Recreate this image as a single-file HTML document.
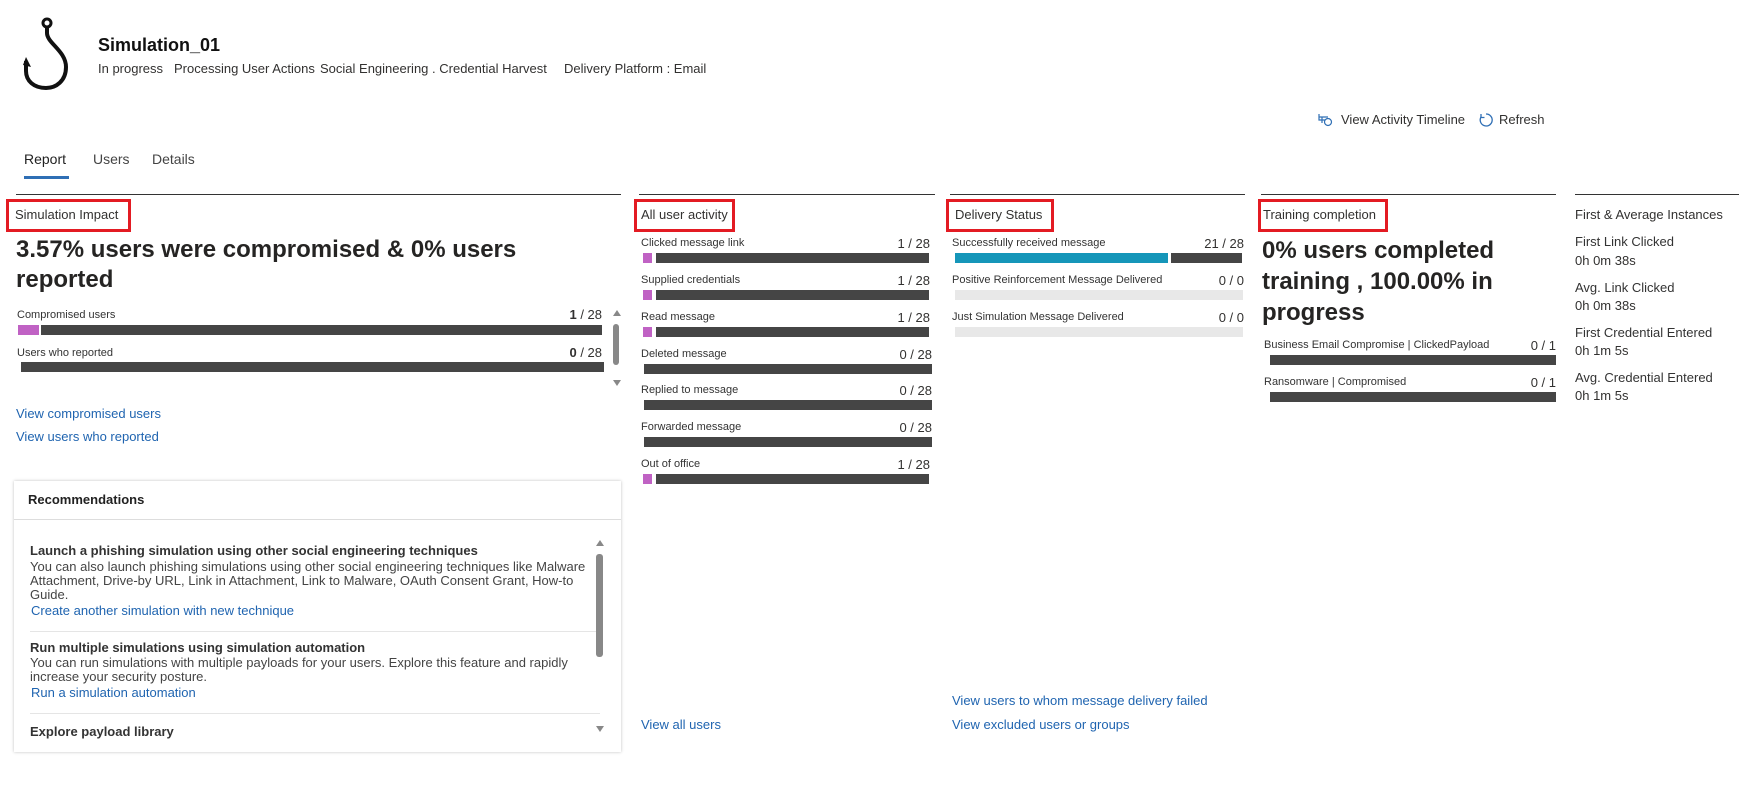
<!DOCTYPE html>
<html><head><meta charset="utf-8"><style>
body{margin:0;width:1739px;height:789px;background:#fff;font-family:"Liberation Sans",sans-serif;color:#323130;position:relative;overflow:hidden}
.a{position:absolute;white-space:nowrap;line-height:16px}
.s{font-size:11px;color:#333}
.m{font-size:13px}
.b{font-weight:bold}
.lk{color:#1f64b0;font-size:13px}
.ln{position:absolute;height:1px;background:#333;top:194px}
.rb{position:absolute;top:199px;height:27px;border:3px solid #e31b23}
.bar{position:absolute;height:10px;background:#454545}
.pu{position:absolute;height:10px;background:#c062c4}
.gr{position:absolute;height:10px;background:#e8e8e8}
.v{position:absolute;font-size:13px;line-height:16px;text-align:right}
.h{position:absolute;font-size:24px;font-weight:bold;line-height:30px;color:#252423}
</style></head><body>
<svg style="position:absolute;left:22px;top:17px" width="52" height="74" viewBox="0 0 52 74"><circle cx="25" cy="6" r="4" fill="none" stroke="#111" stroke-width="3"/><path d="M25 10 L25 16 C25 26 44 34 44 50 C44 64 34 71 24 71 C12 71 4 64 4 54 L4 44" fill="none" stroke="#111" stroke-width="4"/><path d="M1 48 L4 40 L9 50 Z" fill="#111"/></svg>
<div class="a b" style="left:98px;top:35px;font-size:18px;line-height:20px;color:#111">Simulation_01</div>
<div class="a m" style="left:98px;top:61px">In progress</div>
<div class="a m" style="left:174px;top:61px">Processing User Actions</div>
<div class="a m" style="left:320px;top:61px">Social Engineering . Credential Harvest</div>
<div class="a m" style="left:564px;top:61px">Delivery Platform : Email</div>
<svg style="position:absolute;left:1318px;top:112px" width="15" height="15" viewBox="0 0 15 15"><path d="M1 2v6h6M1 5h9M4 5v6" fill="none" stroke="#2f6fb5" stroke-width="1.2"/><circle cx="10" cy="10" r="3.5" fill="none" stroke="#2f6fb5" stroke-width="1.2"/></svg>
<div class="a m" style="left:1341px;top:112px">View Activity Timeline</div>
<svg style="position:absolute;left:1478px;top:112px" width="16" height="16" viewBox="0 0 16 16"><path d="M8 2 A6 6 0 1 1 3 5" fill="none" stroke="#2f6fb5" stroke-width="1.3"/><path d="M3 2v3.5h3.5" fill="none" stroke="#2f6fb5" stroke-width="1.3"/></svg>
<div class="a m" style="left:1499px;top:112px">Refresh</div>
<div class="a" style="left:24px;top:151px;font-size:14px;color:#222">Report</div>
<div class="a" style="left:93px;top:151px;font-size:14px;color:#444">Users</div>
<div class="a" style="left:152px;top:151px;font-size:14px;color:#444">Details</div>
<div style="position:absolute;left:24px;top:176px;width:45px;height:3px;background:#2f6fb5"></div>

<div class="ln" style="left:16px;width:605px"></div>
<div class="ln" style="left:639px;width:296px"></div>
<div class="ln" style="left:950px;width:295px"></div>
<div class="ln" style="left:1261px;width:295px"></div>
<div class="ln" style="left:1575px;width:164px"></div>
<div class="rb" style="left:6px;width:119px"></div>
<div class="rb" style="left:634px;width:95px"></div>
<div class="rb" style="left:946px;width:102px"></div>
<div class="rb" style="left:1258px;width:124px"></div>
<div class="a m" style="left:15px;top:207px">Simulation Impact</div>
<div class="a m" style="left:641px;top:207px">All user activity</div>
<div class="a m" style="left:955px;top:207px">Delivery Status</div>
<div class="a m" style="left:1263px;top:207px">Training completion</div>
<div class="a m" style="left:1575px;top:207px">First &amp; Average Instances</div>

<div class="h" style="left:16px;top:235px;width:600px">3.57% users were compromised &amp; 0% users reported</div>
<div class="a s" style="left:17px;top:307px">Compromised users</div>
<div class="v" style="left:540px;width:62px;top:307px"><b>1</b> / 28</div>
<div class="pu" style="left:18px;top:325px;width:21px"></div><div class="bar" style="left:41px;top:325px;width:561px"></div>
<div class="a s" style="left:17px;top:345px">Users who reported</div>
<div class="v" style="left:540px;width:62px;top:345px"><b>0</b> / 28</div>
<div class="bar" style="left:21px;top:362px;width:583px"></div>
<div style="position:absolute;left:613px;top:310px;width:0;height:0;border:4px solid transparent;border-bottom:6px solid #888;border-top:0"></div>
<div style="position:absolute;left:613px;top:324px;width:6px;height:41px;background:#888;border-radius:3px"></div>
<div style="position:absolute;left:613px;top:380px;width:0;height:0;border:4px solid transparent;border-top:6px solid #888;border-bottom:0"></div>
<div class="a lk" style="left:16px;top:406px">View compromised users</div>
<div class="a lk" style="left:16px;top:429px">View users who reported</div>

<div style="position:absolute;left:14px;top:481px;width:607px;height:271px;box-shadow:0 0 3px rgba(0,0,0,.25);background:#fff"></div>
<div class="a b m" style="left:28px;top:492px;color:#222">Recommendations</div>
<div style="position:absolute;left:14px;top:519px;width:607px;height:1px;background:#ddd"></div>
<div class="a b m" style="left:30px;top:543px;color:#333">Launch a phishing simulation using other social engineering techniques</div>
<div class="a m" style="left:30px;top:560px;line-height:14px;white-space:normal;width:560px;color:#444">You can also launch phishing simulations using other social engineering techniques like Malware Attachment, Drive-by URL, Link in Attachment, Link to Malware, OAuth Consent Grant, How-to Guide.</div>
<div class="a lk" style="left:31px;top:603px">Create another simulation with new technique</div>
<div style="position:absolute;left:30px;top:631px;width:570px;height:1px;background:#e5e5e5"></div>
<div class="a b m" style="left:30px;top:640px;color:#333">Run multiple simulations using simulation automation</div>
<div class="a m" style="left:30px;top:656px;line-height:14px;white-space:normal;width:560px;color:#444">You can run simulations with multiple payloads for your users. Explore this feature and rapidly increase your security posture.</div>
<div class="a lk" style="left:31px;top:685px">Run a simulation automation</div>
<div style="position:absolute;left:30px;top:713px;width:570px;height:1px;background:#e5e5e5"></div>
<div style="position:absolute;left:30px;top:722px;height:17px;overflow:hidden;font-size:13px;font-weight:bold;color:#333;line-height:20px">Explore payload library</div>
<div style="position:absolute;left:596px;top:540px;width:0;height:0;border:4px solid transparent;border-bottom:6px solid #888;border-top:0"></div>
<div style="position:absolute;left:596px;top:554px;width:7px;height:103px;background:#888;border-radius:3px"></div>
<div style="position:absolute;left:596px;top:726px;width:0;height:0;border:4px solid transparent;border-top:6px solid #888;border-bottom:0"></div>

<!-- panel 2 -->
<div class="a s" style="left:641px;top:235px">Clicked message link</div><div class="v" style="left:870px;width:60px;top:236px">1 / 28</div><div class="pu" style="left:643px;top:253px;width:9px"></div><div class="bar" style="left:656px;top:253px;width:273px"></div>
<div class="a s" style="left:641px;top:272px">Supplied credentials</div><div class="v" style="left:870px;width:60px;top:273px">1 / 28</div><div class="pu" style="left:643px;top:290px;width:9px"></div><div class="bar" style="left:656px;top:290px;width:273px"></div>
<div class="a s" style="left:641px;top:309px">Read message</div><div class="v" style="left:870px;width:60px;top:310px">1 / 28</div><div class="pu" style="left:643px;top:327px;width:9px"></div><div class="bar" style="left:656px;top:327px;width:273px"></div>
<div class="a s" style="left:641px;top:346px">Deleted message</div><div class="v" style="left:870px;width:62px;top:347px">0 / 28</div><div class="bar" style="left:644px;top:364px;width:288px"></div>
<div class="a s" style="left:641px;top:382px">Replied to message</div><div class="v" style="left:870px;width:62px;top:383px">0 / 28</div><div class="bar" style="left:644px;top:400px;width:288px"></div>
<div class="a s" style="left:641px;top:419px">Forwarded message</div><div class="v" style="left:870px;width:62px;top:420px">0 / 28</div><div class="bar" style="left:644px;top:437px;width:288px"></div>
<div class="a s" style="left:641px;top:456px">Out of office</div><div class="v" style="left:870px;width:60px;top:457px">1 / 28</div><div class="pu" style="left:643px;top:474px;width:9px"></div><div class="bar" style="left:656px;top:474px;width:273px"></div>
<div class="a lk" style="left:641px;top:717px">View all users</div>

<!-- panel 3 -->
<div class="a s" style="left:952px;top:235px">Successfully received message</div><div class="v" style="left:1180px;width:64px;top:236px">21 / 28</div>
<div style="position:absolute;left:955px;top:253px;width:213px;height:10px;background:#1596b9"></div><div class="bar" style="left:1171px;top:253px;width:71px"></div>
<div class="a s" style="left:952px;top:272px">Positive Reinforcement Message Delivered</div><div class="v" style="left:1180px;width:64px;top:273px">0 / 0</div><div class="gr" style="left:955px;top:290px;width:288px"></div>
<div class="a s" style="left:952px;top:309px">Just Simulation Message Delivered</div><div class="v" style="left:1180px;width:64px;top:310px">0 / 0</div><div class="gr" style="left:955px;top:327px;width:288px"></div>
<div class="a lk" style="left:952px;top:693px">View users to whom message delivery failed</div>
<div class="a lk" style="left:952px;top:717px">View excluded users or groups</div>

<!-- panel 4 -->
<div class="h" style="left:1262px;top:235px;width:290px;line-height:31px">0% users completed training , 100.00% in progress</div>
<div class="a s" style="left:1264px;top:337px">Business Email Compromise | ClickedPayload</div><div class="v" style="left:1500px;width:56px;top:338px">0 / 1</div><div class="bar" style="left:1270px;top:355px;width:286px"></div>
<div class="a s" style="left:1264px;top:374px">Ransomware | Compromised</div><div class="v" style="left:1500px;width:56px;top:375px">0 / 1</div><div class="bar" style="left:1270px;top:392px;width:286px"></div>

<!-- panel 5 -->
<div class="a m" style="left:1575px;top:234px;color:#333">First Link Clicked</div>
<div class="a m" style="left:1575px;top:253px">0h 0m 38s</div>
<div class="a m" style="left:1575px;top:280px;color:#333">Avg. Link Clicked</div>
<div class="a m" style="left:1575px;top:298px">0h 0m 38s</div>
<div class="a m" style="left:1575px;top:325px;color:#333">First Credential Entered</div>
<div class="a m" style="left:1575px;top:343px">0h 1m 5s</div>
<div class="a m" style="left:1575px;top:370px;color:#333">Avg. Credential Entered</div>
<div class="a m" style="left:1575px;top:388px">0h 1m 5s</div>
</body></html>
